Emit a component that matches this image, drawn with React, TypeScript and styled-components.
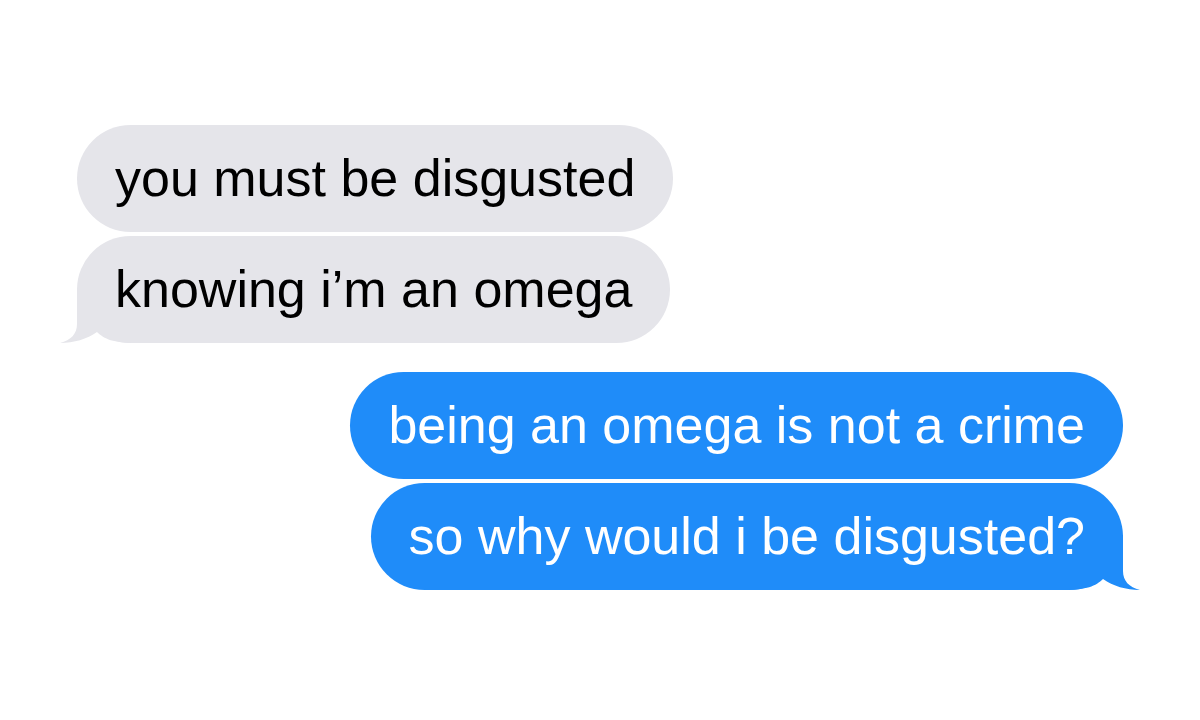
import styled, { createGlobalStyle } from "styled-components";

type Side = "in" | "out";

const messages: { side: Side; lines: string[] }[] = [
  { side: "in", lines: ["you must be disgusted", "knowing i’m an omega"] },
  {
    side: "out",
    lines: ["being an omega is not a crime", "so why would i be disgusted?"],
  },
];

const Tail = ({ side }: { side: Side }) => (
  <TailSvg $side={side} width="75" height="55" viewBox="0 0 75 55">
    <path d="M17,0 L17,36 C17,46 11,52 0,55 C14,55 27,51 37,44 C44,51 54,55 75,55 L75,0 Z" />
  </TailSvg>
);

const App = () => {
  return (
    <>
      <GlobalStyle />
      <Page>
        {messages.map((group, gi) => (
          <Group key={gi} $side={group.side}>
            {group.lines.map((line, i) => (
              <Bubble key={i} $side={group.side}>
                {i === group.lines.length - 1 && <Tail side={group.side} />}
                <Label>{line}</Label>
              </Bubble>
            ))}
          </Group>
        ))}
      </Page>
    </>
  );
};

export default App;

const GlobalStyle = createGlobalStyle`
  html, body {
    margin: 0;
    background: #ffffff;
  }
`;

const Page = styled.div`
  width: 1200px;
  height: 720px;
  box-sizing: border-box;
  padding: 125px 77px 0;
  display: flex;
  flex-direction: column;
  gap: 29px;
  font-family: "Liberation Sans", Arial, sans-serif;
`;

const Group = styled.div<{ $side: Side }>`
  display: flex;
  flex-direction: column;
  gap: 4px;
  align-items: ${({ $side }) => ($side === "in" ? "flex-start" : "flex-end")};
`;

const Bubble = styled.div<{ $side: Side }>`
  position: relative;
  padding: 24px 38px;
  border-radius: 54px;
  font-size: 52px;
  line-height: 59px;
  white-space: nowrap;
  background: ${({ $side }) => ($side === "in" ? "#e5e5ea" : "#1f8cf9")};
  color: ${({ $side }) => ($side === "in" ? "#000000" : "#ffffff")};
  fill: ${({ $side }) => ($side === "in" ? "#e5e5ea" : "#1f8cf9")};
`;

const Label = styled.span`
  position: relative;
  z-index: 1;
`;

const TailSvg = styled.svg<{ $side: Side }>`
  position: absolute;
  bottom: 0;
  ${({ $side }) =>
    $side === "in" ? "left: -17px;" : "right: -17px; transform: scaleX(-1);"}
  pointer-events: none;
`;
